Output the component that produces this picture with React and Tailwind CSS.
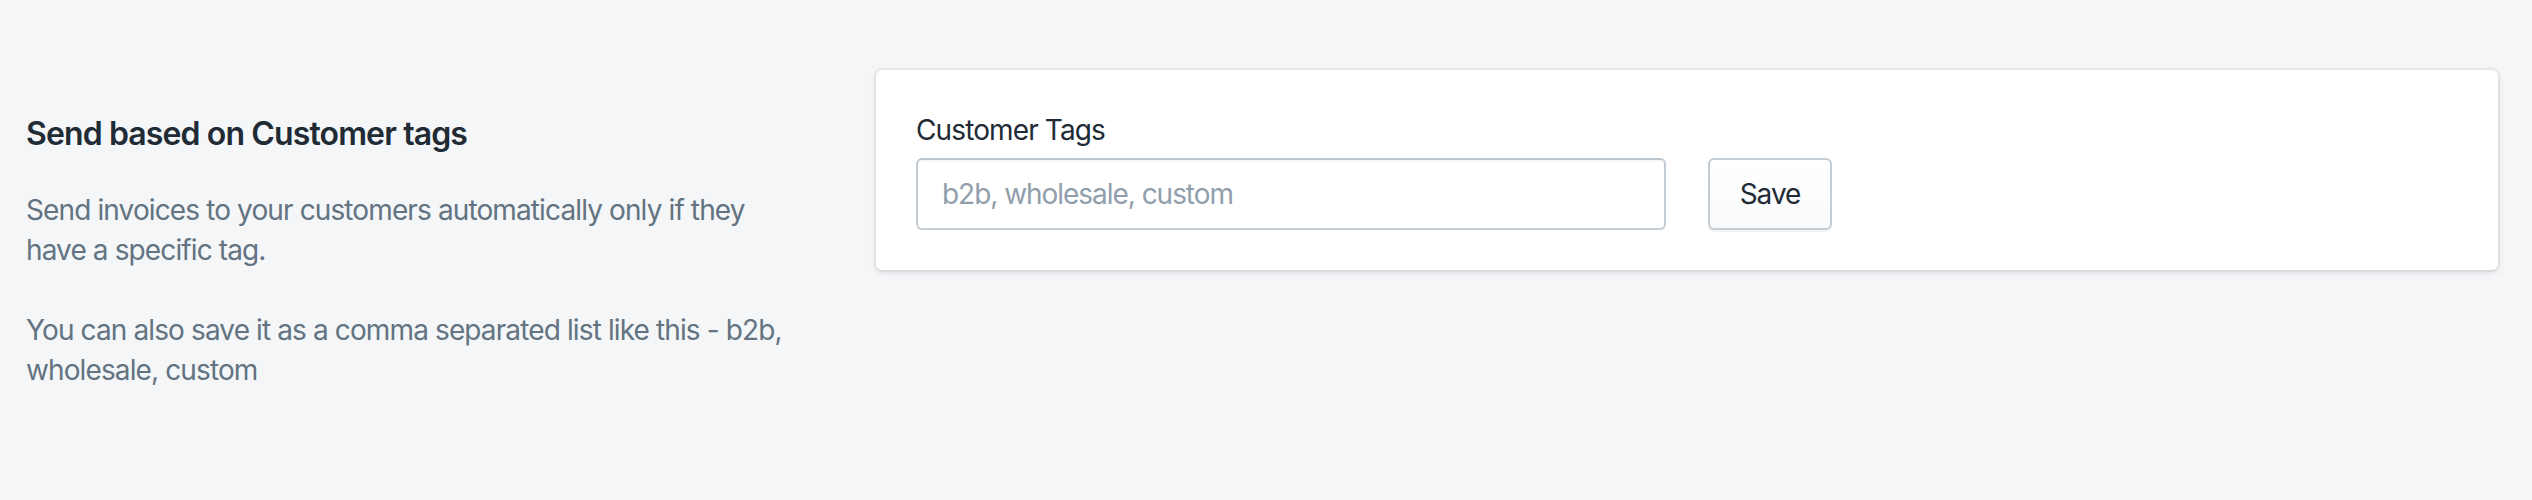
import React from 'react'

function AnnotatedSection({ title, children, description }) {
    return (
        <div className="flex items-start">
            {/* Annotation */}
            <div className="w-[810px] shrink-0 pt-[40px] pr-[40px]">
                <h2 className="text-[32px] leading-[48px] font-semibold text-[#212b36]">
                    {title}
                </h2>
                <div className="mt-[32px] text-[28px] leading-[40px] text-[#637381]">
                    {description}
                </div>
            </div>

            {/* Content */}
            <div className="ml-[40px] flex-1">{children}</div>
        </div>
    )
}

export default function App() {
    return (
        <div className="h-[500px] bg-[#f4f6f8] pl-[26px] pr-[34px] pt-[70px] font-['Inter','Liberation_Sans',sans-serif] tracking-[-0.055em] antialiased">
            <AnnotatedSection
                title="Send based on Customer tags"
                description={
                    <>
                        <p>Send invoices to your customers automatically only if they have a specific tag.</p>
                        <p className="mt-[40px]">
                            You can also save it as a comma separated list like this - b2b, wholesale, custom
                        </p>
                    </>
                }
            >
                <div className="rounded-[6px] bg-white p-[40px] shadow-[0_0_0_2px_rgba(63,63,68,0.05),0_2px_6px_0_rgba(63,63,68,0.15)]">
                    <label htmlFor="customer-tags" className="block text-[28px] leading-[40px] text-[#212b36]">
                        Customer Tags
                    </label>
                    <div className="mt-[8px] flex items-center gap-[42px]">
                        <input
                            id="customer-tags"
                            type="text"
                            placeholder="b2b, wholesale, custom"
                            className="h-[72px] w-[750px] rounded-[6px] border-2 border-[#c4cdd5] border-t-[#bcc4cc] bg-white px-[24px] text-[28px] tracking-[-0.037em] text-[#212b36] placeholder:text-[#919eab] shadow-[inset_0_2px_0_0_rgba(99,115,129,0.05)] outline-none"
                        />
                        <button
                            type="button"
                            className="h-[72px] w-[124px] rounded-[6px] border-2 border-[#c4cdd5] bg-gradient-to-b from-white to-[#f9fafb] text-[28px] tracking-[-0.037em] text-[#212b36] shadow-[0_2px_0_0_rgba(22,29,37,0.05)]"
                        >
                            Save
                        </button>
                    </div>
                </div>
            </AnnotatedSection>
        </div>
    )
}
